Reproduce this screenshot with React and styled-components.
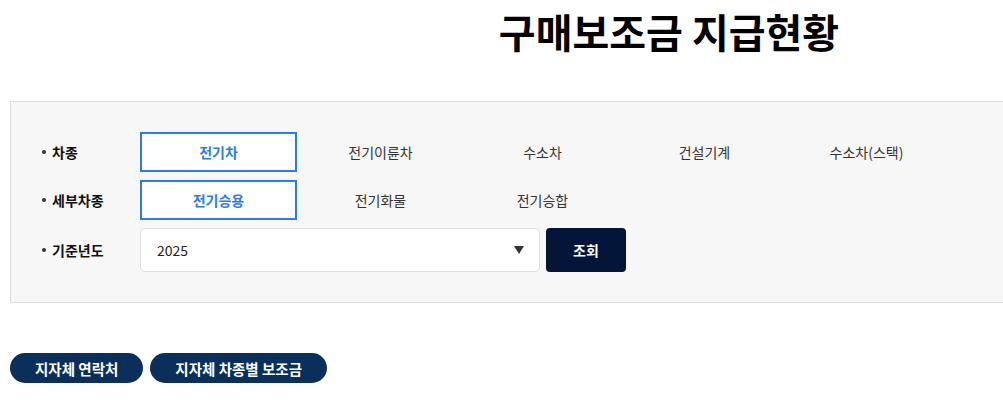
import styled, { createGlobalStyle } from 'styled-components'

const GlobalStyle = createGlobalStyle`
  html, body {
    margin: 0;
    padding: 0;
    overflow: hidden;
    background: #fff;
    font-family: "Noto Sans CJK KR", "Noto Sans", sans-serif;
  }
`

const Page = styled.div`
  width: 1318px;
  margin-left: 10px;
`

const Title = styled.h1`
  margin: 0;
  padding-top: 2px;
  height: 101px;
  box-sizing: border-box;
  text-align: center;
  font-size: 40px;
  font-weight: 700;
  color: #000;
`

const SearchBox = styled.div`
  border: 1px solid #dddddd;
  background: #f7f7f7;
  padding: 30px 29px 30px;
  display: flex;
  flex-direction: column;
  gap: 8px;
`

const Row = styled.div`
  display: flex;
  align-items: center;
  height: ${p => (p.tall ? 44 : 40)}px;
`

const Label = styled.div`
  width: 100px;
  display: flex;
  align-items: center;
  font-size: 14px;
  font-weight: 700;
  color: #111;
  &::before {
    content: '';
    width: 4px;
    height: 4px;
    border-radius: 50%;
    background: #333;
    margin: 0 6px 0 2px;
  }
`

const Options = styled.div`
  display: flex;
  gap: 5px;
`

const Option = styled.div`
  width: 157px;
  height: 40px;
  box-sizing: border-box;
  display: flex;
  align-items: center;
  justify-content: center;
  font-size: 14px;
  font-weight: ${p => (p.active ? 700 : 400)};
  color: ${p => (p.active ? '#2b7de0' : '#333')};
  background: ${p => (p.active ? '#fff' : 'transparent')};
  border: 2px solid ${p => (p.active ? '#2b7de0' : 'transparent')};
`

const Select = styled.div`
  width: 400px;
  height: 44px;
  box-sizing: border-box;
  background: #fff;
  border: 1px solid #dddddd;
  border-radius: 5px;
  padding: 0 15px 0 16px;
  display: flex;
  align-items: center;
  justify-content: space-between;
  font-size: 14px;
  color: #222;
`

const SearchButton = styled.button`
  margin-left: 6px;
  width: 80px;
  height: 44px;
  border: 0;
  border-radius: 4px;
  background: #03163a;
  color: #fff;
  font-family: inherit;
  font-size: 14px;
  font-weight: 700;
`

const LinkBar = styled.div`
  display: flex;
  gap: 7px;
  margin-top: 50px;
`

const PillButton = styled.button`
  height: 30px;
  padding: 0 25px;
  border: 0;
  border-radius: 15px;
  background: #0a2f5a;
  color: #fff;
  font-family: inherit;
  font-size: 14.5px;
  font-weight: 700;
`

const carTypes = ['전기차', '전기이륜차', '수소차', '건설기계', '수소차(스택)']
const subTypes = ['전기승용', '전기화물', '전기승합']

export default function App() {
  return (
    <Page>
      <GlobalStyle />
      <Title>구매보조금 지급현황</Title>
      <SearchBox>
        <Row>
          <Label>차종</Label>
          <Options>
            {carTypes.map((t, i) => (
              <Option key={t} active={i === 0}>{t}</Option>
            ))}
          </Options>
        </Row>
        <Row>
          <Label>세부차종</Label>
          <Options>
            {subTypes.map((t, i) => (
              <Option key={t} active={i === 0}>{t}</Option>
            ))}
          </Options>
        </Row>
        <Row tall>
          <Label>기준년도</Label>
          <Select>
            <span>2025</span>
            <svg width="10" height="8" viewBox="0 0 10 8">
              <path d="M0 0 H10 L5 8 Z" fill="#333" />
            </svg>
          </Select>
          <SearchButton>조회</SearchButton>
        </Row>
      </SearchBox>
      <LinkBar>
        <PillButton>지자체 연락처</PillButton>
        <PillButton>지자체 차종별 보조금</PillButton>
      </LinkBar>
    </Page>
  )
}
